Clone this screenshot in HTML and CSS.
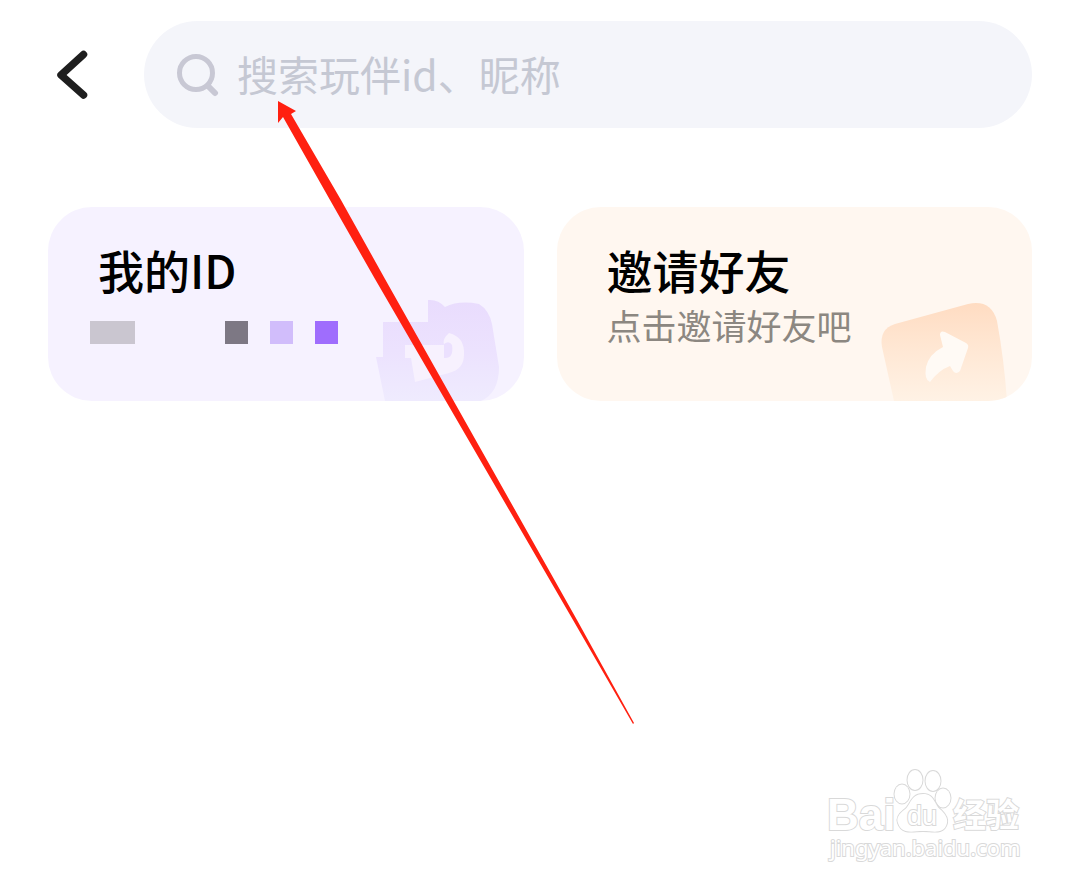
FILE: index.html
```html
<!DOCTYPE html>
<html lang="zh-CN">
<head>
<meta charset="utf-8">
<meta name="viewport" content="width=device-width, initial-scale=1">
<title>搜索玩伴</title>
<link rel="stylesheet" href="styles.css">
</head>
<body>
<header class="topbar">
  <button class="back" type="button" aria-label="返回">
    <svg width="32" height="50" viewBox="0 0 32 50" aria-hidden="true"><path d="M27.500 4.500 5 25 27.500 45" fill="none" stroke="#1e1e1e" stroke-width="7.500" stroke-linecap="round" stroke-linejoin="round"/></svg>
  </button>
  <label class="search">
    <svg class="search-icon" width="44" height="44" viewBox="0 0 44 44" aria-hidden="true"><g fill="none" stroke="#c8c8d4"><circle cx="20" cy="20" r="16.500" stroke-width="5"/><path d="m32 33 7 7" stroke-width="6" stroke-linecap="round"/></g></svg>
    <input class="search-input" type="search" placeholder="搜索玩伴id、昵称" aria-label="搜索玩伴id、昵称">
  </label>
</header>
<main class="cards">
  <section class="card card-id">
    <h2 class="card-title">我的ID</h2>
    <div class="mosaic" aria-hidden="true"><i class="block wide"></i><i class="block dark"></i><i class="block pale"></i><i class="block vivid"></i></div>
    <svg class="card-art" width="140" height="104" viewBox="-10 0 140 104" aria-hidden="true">
      <defs><linearGradient id="violet" x1="0" y1="0" x2="0" y2="1"><stop offset="0" stop-color="#e9dcfd"/><stop offset=".5" stop-color="#ece2fe"/><stop offset="1" stop-color="#efebfe"/></linearGradient></defs>
      <path d="M-1 60h7V25h45V3q10-1 17 7Q82 3 102 7q10 6 13 20l7 43q0 26-18 34H8z" fill="url(#violet)"/>
      <path d="M28 48h39q-2-6 5-12 16 4 15 22 0 14-15 18l-34 9-4-24h-6z" fill="#f7f1fe"/>
      <path d="M67 47q5-4 8 1 2 14-8 13z" fill="#ebe0fe"/>
    </svg>
  </section>
  <section class="card card-invite">
    <h2 class="card-title">邀请好友</h2>
    <p class="card-note">点击邀请好友吧</p>
    <svg class="card-art" width="140" height="104" viewBox="-10 0 140 104" aria-hidden="true">
      <defs><linearGradient id="peach" x1="0" y1="0" x2="0" y2="1"><stop offset="0" stop-color="#ffdcc2"/><stop offset=".5" stop-color="#ffe8d5"/><stop offset="1" stop-color="#fff2e5"/></linearGradient></defs>
      <path d="M9 104-3 50q-3-18 13-23L83 7q23-5 29 17 7 38 10 80z" fill="url(#peach)"/>
      <path d="M55 38q0-5 5-3l21 11q3 2 2 5l-8 23q-4 4-7 0l-3-5q-11 4-20 16-6-2-4-15 3-13 17-20z" fill="#fffaf5"/>
    </svg>
  </section>
</main>
<svg class="pointer" width="356" height="623" viewBox="278 101 356 623" aria-hidden="true"><path d="M278 101 296 111 291 114 341 200 385 279 577 620 634 723 633 724 573 620 375 279 330 200 283 117 278 123Z" fill="#ff2010"/></svg>
<svg class="watermark" width="200" height="100" viewBox="0 0 200 100" role="img" aria-label="Baidu 经验 jingyan.baidu.com">
  <g class="mark">
    <text class="mark-brand" x="3" y="63">Bai</text>
    <ellipse cx="78" cy="27" rx="7.500" ry="9.500"/><ellipse cx="91" cy="13" rx="7.500" ry="10"/><ellipse cx="109" cy="14" rx="7.500" ry="10"/><ellipse cx="119" cy="31" rx="7.500" ry="9.500"/>
    <path d="M99 27c-13 0-12 12-19 16-5 4-8 8-6 13 4 12 15 8 25 8s21 4 24-8c1-5-2-9-6-13-7-5-6-16-18-16z"/>
    <text class="mark-du" x="83" y="58">du</text>
    <text class="mark-cjk" x="129" y="60">经验</text>
    <text class="mark-url" x="6" y="89">jingyan.baidu.com</text>
  </g>
</svg>
</body>
</html>
```

FILE: styles.css
```css
* {
  box-sizing: border-box;
}

body {
  position: relative;
  min-height: 100vh;
  margin: 0;
  background: #fff;
  color: #000;
  font-family: "KaiTi", "Noto Sans CJK SC", sans-serif;
}

.topbar {
  display: flex;
  align-items: center;
  gap: 56px;
  padding: 21px 48px 0 56px;
}

.back {
  display: flex;
  padding: 0;
  border: 0;
  background: none;
}

.search {
  display: flex;
  flex: 1;
  align-items: center;
  gap: 17px;
  height: 107px;
  padding: 0 32px;
  border-radius: 54px;
  background: #f4f5fa;
}

.search-icon {
  flex: none;
}

.search-input {
  flex: 1;
  min-width: 0;
  height: 60px;
  padding: 0 0 4px;
  border: 0;
  outline: 0;
  background: none;
  color: #000;
  font: inherit;
  font-size: 41px;
}

.search-input::placeholder {
  color: #c5c8d3;
  opacity: 1;
}

.cards {
  display: grid;
  grid-template-columns: 1fr 1fr;
  gap: 33px;
  padding: 79px 48px 0;
}

.card {
  position: relative;
  overflow: hidden;
  min-height: 194px;
  padding: 34px 42px;
  border-radius: 44px;
}

.card-id {
  background: #f6f2ff;
}

.card-invite {
  background: #fff7f0;
}

.card-title {
  margin: 0;
  padding-left: 8px;
  font-size: 46px;
  font-weight: 500;
  line-height: 56px;
}

.card-note {
  margin: 4px 0 0;
  padding-left: 8px;
  color: #8c8781;
  font-size: 35px;
  line-height: 48px;
}

.card-art {
  position: absolute;
  right: 17px;
  bottom: 0;
}

.mosaic {
  display: flex;
  gap: 22px;
  margin-top: 24px;
}

.block {
  width: 23px;
  height: 23px;
}

.wide {
  width: 45px;
  margin-right: 68px;
  background: #cac6d0;
}

.dark {
  background: #7d7884;
}

.pale {
  background: #d1bdfb;
}

.vivid {
  background: #9f6dfd;
}

.pointer {
  position: absolute;
  top: 101px;
  left: 278px;
  pointer-events: none;
}

.watermark {
  position: absolute;
  right: 56px;
  bottom: 18px;
}

.mark {
  fill: #fff;
  stroke: #d9d9d9;
  stroke-width: 2;
  paint-order: stroke;
  font-family: "Liberation Sans", "Noto Sans CJK SC", sans-serif;
}

.mark-brand {
  font-size: 44px;
  font-weight: 700;
}

.mark-du {
  font-size: 27px;
}

.mark-cjk {
  font-family: "Noto Sans CJK SC", sans-serif;
  font-size: 33px;
  font-weight: 700;
}

.mark-url {
  font-family: "Noto Sans", sans-serif;
  font-size: 22px;
}
```
